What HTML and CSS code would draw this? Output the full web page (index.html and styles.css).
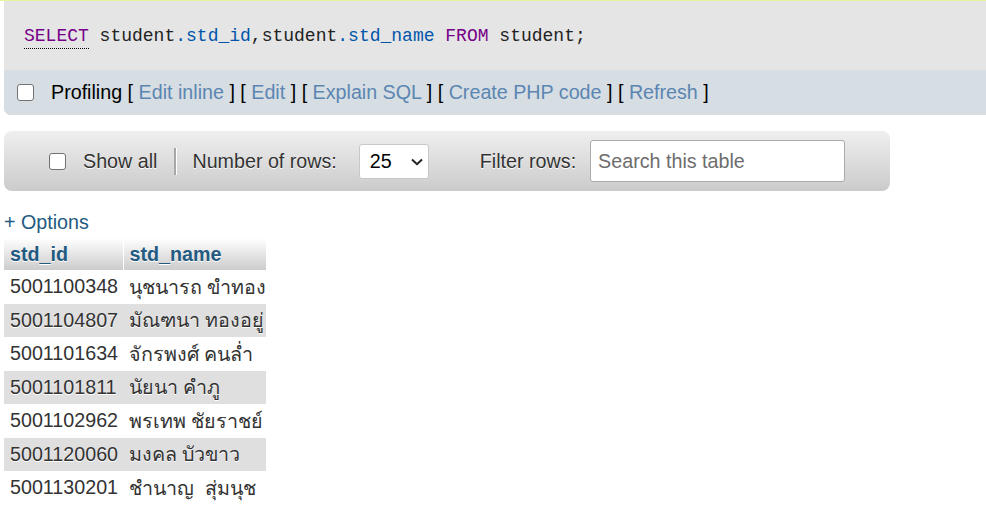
FILE: index.html
```html
<!DOCTYPE html>
<html>
<head>
<meta charset="utf-8">
<link rel="stylesheet" href="styles.css">
</head>
<body>
<div class="topline"></div>
<div class="result">
  <div class="sql"><code><a class="kw doc">SELECT</a> student<span class="v2">.std_id</span>,student<span class="v2">.std_name</span> <span class="kw">FROM</span> student;</code></div>
  <div class="tools">
    <span class="cb"></span>
    <span class="tools-text">Profiling [ <a>Edit inline</a> ] [ <a>Edit</a> ] [ <a>Explain SQL</a> ] [ <a>Create PHP code</a> ] [ <a>Refresh</a> ]</span>
  </div>
</div>
<div class="navbar">
  <span class="cb"></span>
  <span class="lbl showall">Show all</span>
  <span class="sep"></span>
  <span class="lbl rows">Number of rows:</span>
  <span class="select">25<svg class="chev" width="12" height="8" viewBox="0 0 12 8"><path d="M1 1.5 L6 6.2 L11 1.5" fill="none" stroke="#222" stroke-width="2"/></svg></span>
  <span class="lbl filter">Filter rows:</span>
  <span class="search">Search this table</span>
</div>
<div class="options"><a>+ Options</a></div>
<table class="data">
  <colgroup><col class="c1"><col class="c2"></colgroup>
  <thead><tr><th>std_id</th><th>std_name</th></tr></thead>
  <tbody>
    <tr><td>5001100348</td><td>นุชนารถ ขำทอง</td></tr>
    <tr><td>5001104807</td><td>มัณฑนา ทองอยู่</td></tr>
    <tr><td>5001101634</td><td>จักรพงศ์ คนล่ำ</td></tr>
    <tr><td>5001101811</td><td>นัยนา คำภู</td></tr>
    <tr><td>5001102962</td><td>พรเทพ ชัยราชย์</td></tr>
    <tr><td>5001120060</td><td>มงคล บัวขาว</td></tr>
    <tr><td>5001130201</td><td>ชำนาญ&nbsp; สุ่มนุช</td></tr>
  </tbody>
</table>
</body>
</html>
```
FILE: styles.css
```css
html, body {
  margin: 0;
  padding: 0;
  background: #fff;
}
body {
  font-family: "Liberation Sans", Arial, sans-serif;
  font-size: 19.7px;
  color: #333;
}
a { text-decoration: none; }

.topline {
  height: 1px;
  background: #e6f59c;
}
.result {
  margin-left: 4px;
  background: #e5e5e5;
  border-bottom-left-radius: 7px;
  overflow: hidden;
}
.sql {
  height: 69px;
  padding-left: 20px;
  display: flex;
  align-items: center;
}
.sql code {
  font-family: "Liberation Mono", "DejaVu Sans Mono", monospace;
  font-size: 18px;
  color: #222;
  white-space: pre;
}
.kw { color: #770088; }
.v2 { color: #0055aa; }
.doc {
  border-bottom: 1px dotted #000;
  padding-bottom: 2px;
}

.tools {
  height: 45px;
  background: #d6dde3;
  display: flex;
  align-items: center;
  padding-left: 13px;
}
.tools-text {
  color: #000;
  margin-left: 17px;
  white-space: pre;
}
.tools-text a { color: #5b86b2; }

.cb {
  display: inline-block;
  box-sizing: border-box;
  width: 17px;
  height: 17px;
  border: 1.5px solid #727272;
  border-radius: 3px;
  background: #fff;
  flex: none;
}

.navbar {
  margin: 16px 0 0 4px;
  width: 886px;
  height: 60px;
  border-radius: 8px;
  background: linear-gradient(#efefef, #cbcbcb);
  display: flex;
  align-items: center;
  padding-left: 45px;
  box-sizing: border-box;
}
.lbl {
  color: #333;
  text-shadow: 0 1px 0 #fff;
  white-space: pre;
}
.showall { margin-left: 17px; }
.sep {
  width: 2px;
  height: 27px;
  margin-left: 17px;
  background: #a8a8a8;
  box-shadow: 1px 0 0 #fff;
  flex: none;
}
.rows { margin-left: 16px; }
.select {
  margin-left: 22px;
  box-sizing: border-box;
  width: 70px;
  height: 35px;
  background: #fff;
  border: 1px solid #c8c8c8;
  border-radius: 3px;
  display: flex;
  align-items: center;
  justify-content: space-between;
  padding: 0 5px 0 10px;
  color: #000;
  flex: none;
}
.chev { margin-top: 1px; }
.filter { margin-left: 51px; }
.search {
  margin-left: 14px;
  box-sizing: border-box;
  width: 255px;
  height: 42px;
  background: #fff;
  border: 1px solid #aaa;
  border-radius: 3px;
  display: flex;
  align-items: center;
  padding-left: 7px;
  color: #6d6d6d;
  flex: none;
}

.options {
  margin: 20px 0 0 4px;
  line-height: 22px;
  height: 22px;
}
.options a { color: #235a81; }

.data {
  margin: 5px 0 0 4px;
  border-collapse: collapse;
  border-spacing: 0;
  table-layout: fixed;
  width: 262px;
  font-family: "Liberation Sans", Arial, "Noto Sans", sans-serif;
}
.c1 { width: 119px; }
.c2 { width: 143px; }
.data th {
  height: 32px;
  padding: 0 6px;
  text-align: left;
  font-weight: bold;
  color: #235a81;
  text-shadow: 0 1px 0 #fff;
  background: linear-gradient(#fff, #cccccc);
  border-right: 1px solid #fff;
  white-space: nowrap;
}
.data th:last-child { border-right: none; }
.data td {
  height: 33.5px;
  padding: 0 6px;
  white-space: nowrap;
  color: #333;
  text-shadow: 0 1px 0 #fff;
}
.data tbody tr:nth-child(odd) { background: #fff; }
.data tbody tr:nth-child(even) { background: #dfdfdf; }
```
